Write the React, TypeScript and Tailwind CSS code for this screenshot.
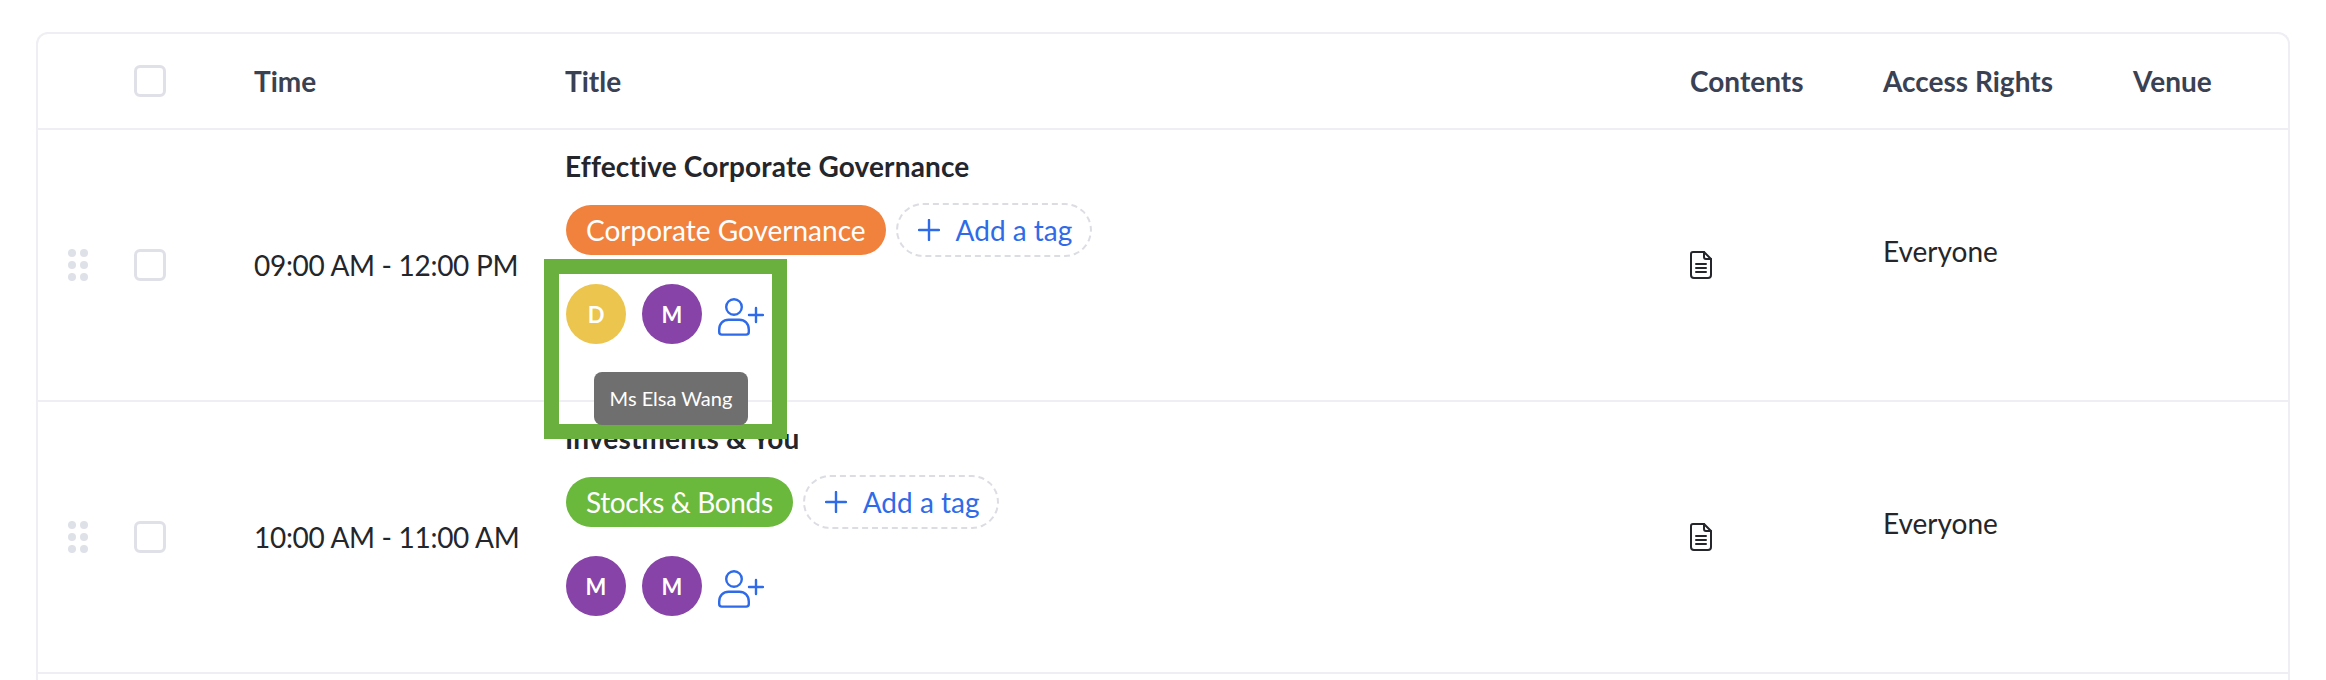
import React from "react";

const Dots = () => (
  <div className="grid grid-cols-2 gap-x-1 gap-y-1 w-5 ml-[30px]">
    {[0, 1, 2, 3, 4, 5].map((i) => (
      <span key={i} className="block w-2 h-2 rounded-full bg-[#dfe1e8]" />
    ))}
  </div>
);

const Check = () => <div className="w-8 h-8 rounded-md border-[3px] border-[#e0e1e8] bg-white -ml-px" />;

const Doc = () => (
  <svg width="22" height="28" viewBox="0 0 22 28" fill="none" stroke="#24262b" strokeWidth="2" strokeLinejoin="round" strokeLinecap="round">
    <path d="M3 1h11l7 7v16a3 3 0 0 1-3 3H4a3 3 0 0 1-3-3V3a2 2 0 0 1 2-2z" />
    <path d="M14 1v5a2 2 0 0 0 2 2h5" />
    <path d="M6 13h10M6 17h10M6 21h10" />
  </svg>
);

const AddPerson = () => (
  <svg className="mt-[6px]" width="46" height="38" viewBox="0 0 46 38" fill="none" stroke="#2f6be8" strokeWidth="2.4" strokeLinecap="round" strokeLinejoin="round">
    <circle cx="16" cy="9" r="7.8" />
    <path d="M1.2 31.5c0-6 4-9.8 9.5-9.8h10.6c5.5 0 9.5 3.8 9.5 9.8v2.5a2.6 2.6 0 0 1-2.6 2.6H3.8A2.6 2.6 0 0 1 1.2 34z" />
    <path d="M31 17h14M38 10v14" />
  </svg>
);

const Plus = () => (
  <svg width="22" height="22" viewBox="0 0 22 22" fill="none" stroke="#2f6be8" strokeWidth="2.4" strokeLinecap="round">
    <path d="M1 11h20M11 1v20" />
  </svg>
);

const Avatar = ({ l, c }: { l: string; c: string }) => (
  <div className={`w-[60px] h-[60px] rounded-full flex items-center justify-center text-white text-[22px] font-bold ${c}`}>{l}</div>
);

const grid = "grid grid-cols-[97px_119px_311px_1125px_193px_250px_1fr]";

const Row = ({ time, title, tag, tagClass, avatars }: { time: string; title: string; tag: string; tagClass: string; avatars: { l: string; c: string }[] }) => (
  <div className={`${grid} h-[272px] border-b-2 border-[#eeeef3] items-center`}>
    <Dots />
    <Check />
    <div className="text-[28px] tracking-[-0.3px] text-[#24262b] whitespace-nowrap">{time}</div>
    <div className="flex flex-col self-start pt-[18px]">
      <div className="text-[28px] leading-9 font-bold tracking-[0.15px] text-[#24262b] [font-variant-ligatures:none]">{title}</div>
      <div className="flex items-center gap-[10px] mt-[19px] h-[54px] ml-px">
        <span className={`h-[50px] px-5 rounded-full flex items-center text-white text-[28px] ${tagClass}`}>{tag}</span>
        <span className="h-[54px] pl-5 pr-[18px] rounded-full flex items-center gap-4 border-2 border-dashed border-[#dcdde3] text-[#2f6be8] text-[28px]">
          <Plus />
          Add a tag
        </span>
      </div>
      <div className="flex items-center mt-[27px] gap-4 ml-px">
        {avatars.map((a, i) => (
          <Avatar key={i} l={a.l} c={a.c} />
        ))}
        <AddPerson />
      </div>
    </div>
    <Doc />
    <div className="text-[28px] text-[#24262b] mb-7">Everyone</div>
    <div />
  </div>
);

export default function App() {
  return (
    <div className="relative w-[2326px] h-[680px] overflow-hidden bg-white font-['Lato','Liberation_Sans',sans-serif]">
      <div className="ml-9 mt-8 w-[2254px] border-2 border-[#eeeef3] border-b-0 rounded-t-xl h-[700px]">
        <div className={`${grid} h-[96px] border-b-2 border-[#eeeef3] items-center text-[28px] font-bold text-[#3a4152]`}>
          <div />
          <Check />
          <div>Time</div>
          <div>Title</div>
          <div>Contents</div>
          <div>Access Rights</div>
          <div>Venue</div>
        </div>
        <Row
          time="09:00 AM - 12:00 PM"
          title="Effective Corporate Governance"
          tag="Corporate Governance"
          tagClass="bg-[#f0823e]"
          avatars={[
            { l: "D", c: "bg-[#ecc54e]" },
            { l: "M", c: "bg-[#8743a8]" },
          ]}
        />
        <Row
          time="10:00 AM - 11:00 AM"
          title="Investments & You"
          tag="Stocks & Bonds"
          tagClass="bg-[#6ab83c] tracking-[-0.35px]"
          avatars={[
            { l: "M", c: "bg-[#8743a8]" },
            { l: "M", c: "bg-[#8743a8]" },
          ]}
        />
      </div>
      <div className="absolute left-[544px] top-[259px] w-[243px] h-[180px] border-[15px] border-[#6ab03e]" />
      <div className="absolute left-[594px] top-[372px] w-[154px] h-[53px] pb-0.5 rounded-lg bg-[#6f6f6f] flex items-center justify-center text-white text-[20px]">
        Ms Elsa Wang
      </div>
    </div>
  );
}
